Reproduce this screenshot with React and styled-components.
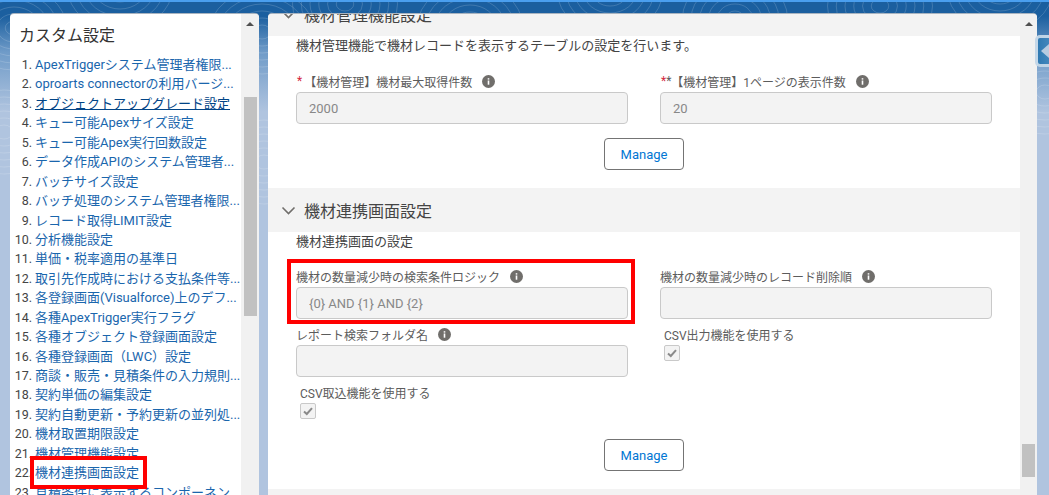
import React from 'react';
import styled, { createGlobalStyle } from 'styled-components';

const menu = [
  { no: 1, label: 'ApexTriggerシステム管理者権限...' },
  { no: 2, label: 'oproarts connectorの利用バージ...' },
  { no: 3, label: 'オブジェクトアップグレード設定', hover: true },
  { no: 4, label: 'キュー可能Apexサイズ設定' },
  { no: 5, label: 'キュー可能Apex実行回数設定' },
  { no: 6, label: 'データ作成APIのシステム管理者...' },
  { no: 7, label: 'バッチサイズ設定' },
  { no: 8, label: 'バッチ処理のシステム管理者権限...' },
  { no: 9, label: 'レコード取得LIMIT設定' },
  { no: 10, label: '分析機能設定' },
  { no: 11, label: '単価・税率適用の基準日' },
  { no: 12, label: '取引先作成時における支払条件等...' },
  { no: 13, label: '各登録画面(Visualforce)上のデフ...' },
  { no: 14, label: '各種ApexTrigger実行フラグ' },
  { no: 15, label: '各種オブジェクト登録画面設定' },
  { no: 16, label: '各種登録画面（LWC）設定' },
  { no: 17, label: '商談・販売・見積条件の入力規則...' },
  { no: 18, label: '契約単価の編集設定' },
  { no: 19, label: '契約自動更新・予約更新の並列処...' },
  { no: 20, label: '機材取置期限設定' },
  { no: 21, label: '機材管理機能設定' },
  { no: 22, label: '機材連携画面設定', marked: true },
  { no: 23, label: '見積条件に表示するコンポーネン' },
];

// centres of the contour rings in the page background
const contours = [
  [14, 26], [120, -14], [262, 30], [345, 2], [470, 24], [610, -10],
  [735, 16], [880, 4], [1000, -12], [1045, 90], [4, 130], [264, 160],
];

const GlobalStyle = createGlobalStyle`
  html, body { margin: 0; height: 100%; overflow: hidden; }
  body {
    font-family: Roboto, "Noto Sans CJK JP", sans-serif;
    font-size: 13px;
    color: #444;
  }
`;

const Page = styled.div`
  position: relative;
  height: 495px;
  box-sizing: border-box;
  padding: 12px 0 0 10px;
  display: flex;
  gap: 9px;
  overflow: hidden;
  border-top: 2px solid #4a9fef;
  background: linear-gradient(180deg, #1b5f9f 0, #1b5f9f 14px, #6f9bc8 50px, #b0c4df 110px, #b0c4df 100%);
`;

const Backdrop = styled.svg`
  position: absolute;
  top: 0;
  left: 0;
  width: 1049px;
  height: 495px;
`;

const Card = styled.div`
  position: relative;
  display: flex;
  height: 481px;
  background: #fff;
  border-radius: 4px 4px 0 0;
  box-shadow: 0 -1px 0 #a9b4c0;
  overflow: hidden;
  flex: none;
`;

const SideCard = styled(Card)`
  width: 249px;
`;

const MainCard = styled(Card)`
  width: 769px;
`;

const Scrollbar = styled.div`
  flex: none;
  width: ${p => p.$width}px;
  background: #f1f1f1;
  display: flex;
  flex-direction: column;
  align-items: center;
`;

const ScrollArrow = styled.div`
  flex: none;
  margin-top: 8px;
  width: 0;
  height: 0;
  border-left: 4px solid transparent;
  border-right: 4px solid transparent;
  border-bottom: 4px solid #505050;
`;

const ScrollThumb = styled.div`
  flex: none;
  width: 13px;
  height: ${p => p.$height}px;
  margin-top: ${p => p.$top}px;
  background: #c1c1c1;
`;

const SideBody = styled.div`
  flex: 1;
  min-width: 0;
  overflow: hidden;
`;

const SideTitle = styled.h2`
  margin: 0;
  padding: 9px 0 0 9px;
  height: 41px;
  box-sizing: border-box;
  font-size: 16px;
  font-weight: 400;
  line-height: 26px;
  color: #333;
`;

const MenuList = styled.ol`
  list-style: none;
  margin: 0;
  padding: 0;
`;

const MenuRow = styled.li`
  position: relative;
  display: flex;
  height: 19.45px;
  line-height: 19.45px;
  white-space: nowrap;
`;

const MenuNo = styled.span`
  flex: none;
  width: 22px;
  text-align: right;
  margin-right: 3px;
  font-size: 12.5px;
  color: #444;
`;

const MenuLink = styled.a`
  color: ${p => (p.$hover ? '#014486' : '#1a66ad')};
  text-decoration: ${p => (p.$hover ? 'underline' : 'none')};
`;

const Highlight = styled.div`
  position: absolute;
  z-index: 2;
  box-sizing: border-box;
  border: 4px solid #f00;
  pointer-events: none;
  top: ${p => p.$top}px;
  left: ${p => p.$left}px;
  width: ${p => p.$width}px;
  height: ${p => p.$height}px;
`;

const MainBody = styled.div`
  flex: 1;
  min-width: 0;
  overflow: hidden;
`;

const Scrolled = styled.div`
  margin-top: -22px;
`;

const SectionHeader = styled.div`
  height: 44px;
  background: #f3f3f3;
  display: flex;
  align-items: center;
  gap: 8px;
  padding-left: 13px;
  font-size: 16px;
  color: #444;
`;

const Chevron = styled.svg`
  width: 15px;
  height: 15px;
  flex: none;
`;

const Section = styled.section`
  padding: 0 28px 18px;
`;

const Description = styled.p`
  margin: 0 0 ${p => p.$gap}px;
  line-height: 20px;
  color: #444;
`;

const FieldGrid = styled.div`
  display: grid;
  grid-template-columns: 332px 332px;
  column-gap: 32px;
  row-gap: 6px;
`;

const Field = styled.div`
  position: relative;
  padding-left: ${p => (p.$check ? 4 : 0)}px;
`;

const Label = styled.div`
  display: flex;
  align-items: center;
  box-sizing: border-box;
  height: 20px;
  padding-bottom: 2px;
  font-size: 12px;
  color: #5c5c5c;
  white-space: nowrap;
`;

const Required = styled.span`
  color: ${p => (p.$muted ? '#5c5c5c' : '#d4263e')};
  margin-left: ${p => (p.$first ? 1 : 0)}px;
  margin-right: ${p => p.$gap || 0}px;
`;

const InfoWrap = styled.span`
  display: inline-flex;
  margin-left: 10px;
`;

const Input = styled.input`
  display: block;
  box-sizing: border-box;
  width: 100%;
  height: 32px;
  padding: 0 12px;
  background: #f3f3f3;
  border: 1px solid #c9c9c9;
  border-radius: 4px;
  font: inherit;
  color: #888;
  -webkit-text-fill-color: #888;
  opacity: 1;
`;

const CheckBox = styled.span`
  display: flex;
  align-items: center;
  justify-content: center;
  width: 16px;
  height: 16px;
  box-sizing: border-box;
  background: #f3f3f3;
  border: 1px solid #c9c9c9;
  border-radius: 2px;
`;

const ButtonRow = styled.div`
  display: flex;
  justify-content: center;
  margin-top: ${p => p.$top}px;
`;

const ManageButton = styled.button`
  width: 80px;
  height: 32px;
  background: #fff;
  border: 1px solid #747474;
  border-radius: 4px;
  font: inherit;
  color: #0176d3;
  padding: 0;
`;

const Handle = styled.div`
  position: absolute;
  top: 33px;
  left: 1035px;
  width: 24px;
  height: 32px;
  box-sizing: border-box;
  border: 3px solid rgba(236, 240, 246, 0.75);
  border-radius: 5px;
  background: linear-gradient(90deg, #2f79b2, #4f8fc2);
  display: flex;
  align-items: center;
`;

const HandleArrow = styled.span`
  margin-left: 3px;
  width: 0;
  height: 0;
  border-top: 7px solid transparent;
  border-bottom: 7px solid transparent;
  border-right: 8px solid #b7cbe0;
`;

const InfoIcon = () => (
  <InfoWrap>
    <svg width="13" height="13" viewBox="0 0 13 13">
      <circle cx="6.5" cy="6.5" r="6.5" fill="#706e6b" />
      <rect x="5.7" y="3.2" width="1.6" height="1.4" fill="#fff" />
      <rect x="5.7" y="5.5" width="1.6" height="4.2" fill="#fff" />
    </svg>
  </InfoWrap>
);

const ChevronIcon = () => (
  <Chevron viewBox="0 0 15 15">
    <path d="M1.5 4.5 L7.5 10.5 L13.5 4.5" fill="none" stroke="#706e6b" strokeWidth="1.6" />
  </Chevron>
);

const CheckField = ({ label }) => (
  <Field $check>
    <Label>{label}</Label>
    <CheckBox>
      <svg width="10" height="10" viewBox="0 0 10 10">
        <path d="M1 5.5 L3.8 8 L9 2.2" fill="none" stroke="#8a8a8a" strokeWidth="2" />
      </svg>
    </CheckBox>
  </Field>
);

const TextField = ({ label, value, marks, marked }) => (
  <Field>
    {marked && <Highlight $top={-8} $left={-9} $width={348} $height={65} />}
    <Label>
      {marks}
      {label}
      <InfoIcon />
    </Label>
    <Input disabled value={value || ''} readOnly />
  </Field>
);

const Scrollbars = ({ width, top, height }) => (
  <Scrollbar $width={width}>
    <ScrollArrow />
    <ScrollThumb $top={top} $height={height} />
  </Scrollbar>
);

export default function App() {
  return (
    <>
      <GlobalStyle />
      <Page>
        <Backdrop viewBox="0 0 1049 495">
          {contours.map(([cx, cy]) =>
            [7, 14, 21, 28, 35, 42].map(r => (
              <ellipse
                key={`${cx}-${r}`}
                cx={cx}
                cy={cy}
                rx={r * 1.25}
                ry={r}
                fill="none"
                stroke="#fff"
                strokeOpacity="0.16"
              />
            ))
          )}
        </Backdrop>
        <SideCard>
          <SideBody>
            <SideTitle>カスタム設定</SideTitle>
            <MenuList>
              {menu.map(m => (
                <MenuRow key={m.no}>
                  {m.marked && <Highlight $top={-7} $left={20} $width={117} $height={33} />}
                  <MenuNo>{m.no}.</MenuNo>
                  <MenuLink $hover={m.hover}>{m.label}</MenuLink>
                </MenuRow>
              ))}
            </MenuList>
          </SideBody>
          <Scrollbars width={18} top={71} height={219} />
        </SideCard>
        <MainCard>
          <MainBody>
            <Scrolled>
              <SectionHeader>
                <ChevronIcon />
                機材管理機能設定
              </SectionHeader>
              <Section>
                <Description $gap={16}>機材管理機能で機材レコードを表示するテーブルの設定を行います。</Description>
                <FieldGrid>
                  <TextField
                    label="【機材管理】機材最大取得件数"
                    value="2000"
                    marks={<Required $first $gap={2}>*</Required>}
                  />
                  <TextField
                    label="【機材管理】1ページの表示件数"
                    value="20"
                    marks={
                      <>
                        <Required $first>*</Required>
                        <Required $muted>*</Required>
                      </>
                    }
                  />
                </FieldGrid>
                <ButtonRow $top={14}>
                  <ManageButton>Manage</ManageButton>
                </ButtonRow>
              </Section>
              <SectionHeader>
                <ChevronIcon />
                機材連携画面設定
              </SectionHeader>
              <Section>
                <Description $gap={15}>機材連携画面の設定</Description>
                <FieldGrid>
                  <TextField label="機材の数量減少時の検索条件ロジック" value="{0} AND {1} AND {2}" marked />
                  <TextField label="機材の数量減少時のレコード削除順" />
                  <TextField label="レポート検索フォルダ名" />
                  <CheckField label="CSV出力機能を使用する" />
                  <CheckField label="CSV取込機能を使用する" />
                </FieldGrid>
                <ButtonRow $top={20}>
                  <ManageButton>Manage</ManageButton>
                </ButtonRow>
              </Section>
              <SectionHeader />
            </Scrolled>
          </MainBody>
          <Scrollbars width={17} top={418} height={33} />
        </MainCard>
        <Handle>
          <HandleArrow />
        </Handle>
      </Page>
    </>
  );
}
